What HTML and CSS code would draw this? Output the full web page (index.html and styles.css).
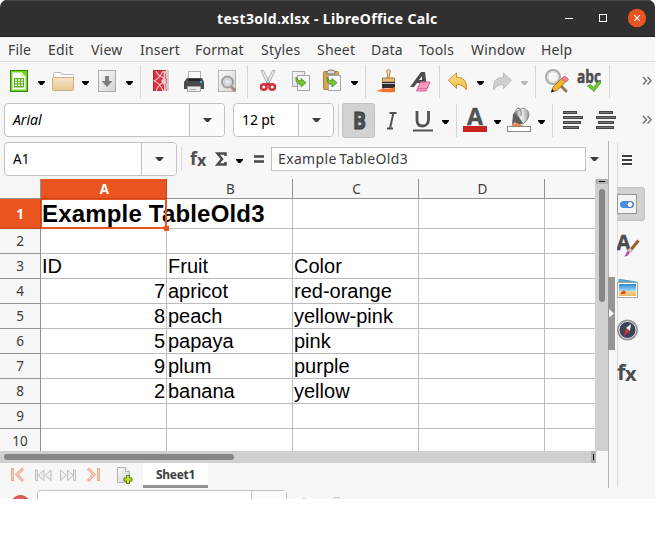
FILE: index.html
```html
<!DOCTYPE html>
<html lang="en">
<head>
<meta charset="utf-8">
<title>test3old.xlsx - LibreOffice Calc</title>
<link rel="stylesheet" href="styles.css">
</head>
<body>
<svg class="defs" width="0" height="0">
  <defs>
    <linearGradient id="paper" x1="0" y1="0" x2="1" y2="1"><stop offset="0" stop-color="#fafafa"/><stop offset="1" stop-color="#d4d4d4"/></linearGradient>
    <linearGradient id="tan" x1="0" y1="0" x2="0" y2="1"><stop offset="0" stop-color="#f8e6c8"/><stop offset="1" stop-color="#e8c894"/></linearGradient>
    <linearGradient id="gold" x1="0" y1="0" x2="0" y2="1"><stop offset="0" stop-color="#fce08a"/><stop offset="1" stop-color="#f2b93c"/></linearGradient>
    <linearGradient id="metal" x1="0" y1="0" x2="1" y2="0"><stop offset="0" stop-color="#777"/><stop offset=".5" stop-color="#f1f1f1"/><stop offset="1" stop-color="#999"/></linearGradient>
    <linearGradient id="sky" x1="0" y1="0" x2="0" y2="1"><stop offset="0" stop-color="#2a87cf"/><stop offset=".6" stop-color="#a5def5"/><stop offset=".62" stop-color="#f7d596"/><stop offset="1" stop-color="#eeb35d"/></linearGradient>
    <path id="drop" d="M0 0h7v1L4.500 4h-2L0 1z"/>
    <path id="copyarrow" d="M0 1q1 4 5 4V2.500l5 4.200-5 4.300V8.500Q-1 8 0 1z" fill="#73c437" stroke="#4b8c1d" stroke-width=".8"/>
  </defs>
</svg>
<div class="window">
  <header class="titlebar">
    <h1>test3old.xlsx - LibreOffice Calc</h1>
    <svg class="controls" width="97" height="36" viewBox="558 0 97 36">
      <path d="M565 18.500h8" stroke="#fff"/>
      <rect x="599.500" y="14.500" width="7" height="7" fill="none" stroke="#fff"/>
      <circle cx="637" cy="18" r="9.200" fill="#e95420"/>
      <path d="M634.200 15.200l5.600 5.600m0-5.600l-5.600 5.600" stroke="#fff" stroke-width="1.200"/>
    </svg>
  </header>
  <nav class="menubar">
    <span>File</span><span>Edit</span><span>View</span><span>Insert</span><span>Format</span><span>Styles</span><span>Sheet</span><span>Data</span><span>Tools</span><span>Window</span><span>Help</span>
  </nav>

  <div class="toolbar">
    <svg width="48" height="38" viewBox="0 62 48 38">
      <rect x="10.500" y="70.500" width="17" height="21" fill="#80d11a" stroke="#2d8810"/>
      <path d="M12.500 72.500h9l4 4v13h-13z" fill="#fff" stroke="#bfe69c"/><path d="M21.500 72.500v4h4z" fill="#c7efa0"/>
      <rect x="14" y="78" width="10" height="9.500" fill="#5fae25"/>
      <path d="M15 80h2m1 0h2m1 0h2M15 82.500h2m1 0h2m1 0h2M15 85.200h2m1 0h2m1 0h2" stroke="#efffe2" stroke-width="1.500"/>
      <use href="#drop" x="38" y="81"/>
    </svg>
    <svg width="44" height="38" viewBox="48 62 44 38">
      <path d="M53.500 90V73.500q0-1 1-1h6q1 0 1 2h11q1 0 1 1V80h-20" fill="#fff" stroke="#bbb"/>
      <rect x="52.500" y="77.500" width="21" height="13" rx="1" fill="url(#tan)" stroke="#cfae7d"/>
      <use href="#drop" x="82" y="81"/>
    </svg>
    <svg width="48" height="38" viewBox="92 62 48 38">
      <rect x="98.500" y="70.500" width="17" height="21" fill="url(#paper)" stroke="#acacac"/>
      <path d="M105 76h4v5h3.500l-5.500 6-5.500-6h3.500z" fill="#7c7f80"/>
      <use href="#drop" x="126" y="81"/>
    </svg>
    <i class="sep"></i>
    <svg width="106" height="38" viewBox="141 62 106 38">
      <rect x="153.500" y="70.500" width="15" height="20" fill="#d9303c" stroke="#b52631"/>
      <path d="M163 71h3.500q-2.500 5 0 10-2 5 0 10H163q3-5-2-10 4-4 2-10z" fill="#e8c9cb"/>
      <path d="M166 70h3v21h-2q-2-5 0-10-2-5-1-11z" fill="#d6cccc"/>
      <path d="M156 71q2 5 8 7M156 91q2-6 8-9M163 71q-4 8-9 10 6 2 9 10" fill="none" stroke="#f7c8cb" stroke-width="1.100"/>
      <path d="M188.500 71.500h12v9h-12z" fill="#fafafa" stroke="#b0b0b0"/>
      <path d="M187 78h15l2 4v7h-20v-7z" fill="#494b4c"/><path d="M188.500 80h12" stroke="#222" stroke-width="2"/>
      <path d="M187.500 86.500h13v5h-13z" fill="#ececec" stroke="#a2a2a2"/><path d="M190 89.500h6" stroke="#aaa"/>
      <rect x="200" y="81" width="2" height="2" fill="#25b9ef"/>
      <rect x="218.500" y="70.500" width="17" height="21" fill="url(#paper)" stroke="#b3b3b3"/>
      <path d="M231.500 87l3 3" stroke="#a18b7e" stroke-width="3" stroke-linecap="round"/>
      <circle cx="227.500" cy="82" r="5.500" fill="#ddd" stroke="#9f9f9f" stroke-width="2"/><circle cx="227.500" cy="82" r="3" fill="#e1e8ef" stroke="#ccc"/>
    </svg>
    <i class="sep"></i>
    <svg width="117" height="38" viewBox="248 62 117 38">
      <path d="M261 71l2-1 7 13-2 2zM275 71l-2-1-7 13 2 2z" fill="#eee" stroke="#999" stroke-width=".8"/>
      <ellipse cx="263.800" cy="87" rx="2.800" ry="2.800" fill="#fff" stroke="#d62c38" stroke-width="2.500"/><ellipse cx="272.200" cy="87" rx="2.800" ry="2.800" fill="#fff" stroke="#d62c38" stroke-width="2.500"/>
      <circle cx="268" cy="84" r="1.400" fill="#b8232e"/>
      <rect x="292.500" y="71.500" width="12" height="15" fill="url(#paper)" stroke="#aaa"/><rect x="297.500" y="75.500" width="12" height="15" fill="#f7f7f7" stroke="#a8a8a8"/><use href="#copyarrow" x="296" y="76"/>
      <rect x="323.500" y="71.500" width="15" height="18" rx="1" fill="#d9a657" stroke="#a8823f"/><path d="M327 72q0-2 4-2t4 2v2h-8z" fill="#ddd" stroke="#777"/>
      <rect x="328.500" y="75.500" width="12" height="15" fill="#f7f7f7" stroke="#a8a8a8"/><use href="#copyarrow" x="327" y="76"/>
      <use href="#drop" x="351" y="81"/>
    </svg>
    <i class="sep"></i>
    <svg width="73" height="38" viewBox="366 62 73 38">
      <path d="M387.500 78v-4q-2-4 1-4.500 3 .5 1 4.500v4" fill="#f3d9a8" stroke="#b08a50"/>
      <path d="M382.500 78h12v4h-12z" fill="#e5bd79" stroke="#a27b44"/>
      <path d="M382 82h13v6h-13z" fill="#2e2e2e"/><path d="M382 83.500h13" stroke="#bbb"/>
      <path d="M376 91q5-1 7-3 6 2 12-1v5q-10 1-19-1z" fill="#f5712a"/>
      <path d="M421 72h4l2 15h-4l-1-4h-5l-3 4h-4zM422 76l-3 4h3z" fill="#4b4e50" fill-rule="evenodd"/>
      <path d="M420.500 82h9.500l-4 9h-9.500z" fill="#f89ac0" stroke="#d75b95" stroke-linejoin="round"/><path d="M417.500 88.500h9" stroke="#ee6aa5"/>
    </svg>
    <i class="sep"></i>
    <svg width="95" height="38" viewBox="440 62 95 38">
      <path d="M448.500 80l8-7v4.500q11-1 10 12.500-3-5.500-10-5.500v4z" fill="url(#gold)" stroke="#c59430"/>
      <use href="#drop" x="477" y="81"/>
      <path d="M511.500 80l-8-7v4.500q-11-1-10 12.500 3-5.500 10-5.500v4z" fill="#cfcfcf" stroke="#bdbdbd"/>
      <use href="#drop" x="521" y="81" fill="#b7b7b7"/>
    </svg>
    <i class="sep"></i>
    <svg width="73" height="38" viewBox="536 62 73 38">
      <path d="M558 83l8 8" stroke="#94745a" stroke-width="3" stroke-linecap="round"/><circle cx="553" cy="77" r="7" fill="#f2f2f2" stroke="#aaa" stroke-width="2"/><circle cx="553" cy="77" r="5.200" fill="#f5f6f7" stroke="#d6d6d6"/>
      <path d="M551.500 92l1.500-5 10-10 4 3.500-10 10z" fill="#f2b62e" stroke="#906618" stroke-width=".8"/><path d="M561.500 78.500l2-2q2-1 4 1.500t-.5 3l-1.500 1z" fill="#f0809a" stroke="#b46476" stroke-width=".7"/><path d="M551 92.500l1-3.500 2.500 2.200z" fill="#222"/>
      <text class="abc" x="577" y="83" textLength="24" lengthAdjust="spacingAndGlyphs">abc</text>
      <path d="M587.500 86l3-1.500 3 3 5-6.500 2.500 1.500-7 9z" fill="#6acb34" stroke="#49971e" stroke-width=".8"/>
    </svg>
    <i class="sep"></i>
    <svg width="45" height="38" viewBox="610 62 45 38"><path d="M643 77l3.500 3.800-3.500 3.800m4.500-7.600l3.500 3.800-3.500 3.800" fill="none" stroke="#73777a" stroke-width="1.500"/></svg>
  </div>

  <div class="formatbar">
    <div class="combo font"><em>Arial</em><b><svg width="9" height="5"><path d="M0 0h9L5.500 4h-2z" fill="#3c3c3c"/></svg></b></div>
    <div class="combo size"><span>12 pt</span><b><svg width="9" height="5"><path d="M0 0h9L5.500 4h-2z" fill="#3c3c3c"/></svg></b></div>
    <i class="sep"></i>
    <svg width="117" height="42" viewBox="339 99 117 42">
      <rect x="342.500" y="103.500" width="32" height="34" rx="2" fill="#d2d2d2" stroke="#c2c2c2"/>
      <text class="glyph bold" x="353" y="129" textLength="13" lengthAdjust="spacingAndGlyphs">B</text>
      <path d="M389.500 113h7m-9.500 15.500h6M393.500 112.500l-3.500 16" stroke="#505355" stroke-width="2" fill="none"/>
      <path d="M417 111v9q0 6 5.500 6t6-6v-9" fill="none" stroke="#505355" stroke-width="2.800"/><path d="M413 130.500h20" stroke="#505355" stroke-width="2"/>
      <use href="#drop" x="442" y="120"/>
    </svg>
    <i class="sep"></i>
    <svg width="95" height="42" viewBox="457 99 95 42">
      <text class="glyph" x="467" y="125" textLength="16" lengthAdjust="spacingAndGlyphs">A</text>
      <rect x="463" y="126" width="24" height="6" fill="#c9211e"/><use href="#drop" x="494" y="120"/>
      <path d="M514 113l9-5q6 2 6 7-1 6-6 9l-7-1z" fill="url(#metal)" stroke="#8b8b8b"/>
      <path d="M512 125l1-11q3-1 5 2l5 7-4 2-4-3z" fill="#5d5d5d"/><path d="M517 116q-3-6 1-8 4 0 3 8" fill="none" stroke="#777"/>
      <path d="M511 126q4-5 9-1.500l4 1.500z" fill="#ef8547"/>
      <rect x="507.500" y="126.500" width="23" height="5" fill="#fff" stroke="#888"/><use href="#drop" x="538" y="120"/>
    </svg>
    <i class="sep"></i>
    <svg width="102" height="42" viewBox="553 99 102 42">
      <path d="M563 112.500h14m-14 5h20m-20 5h18m-18 5h16m20-15h14m-17 5h20m-18 5h16m-18 5h18" stroke="#414345" stroke-width="3"/>
      <path d="M564 112.500h12m-12 5h18m-18 5h16m-16 5h14m22-15h12m-15 5h18m-16 5h14m-16 5h16" stroke="#777"/>
      <path d="M643 116l3.500 3.800-3.500 3.800m4.500-7.600l3.500 3.800-3.500 3.800" fill="none" stroke="#73777a" stroke-width="1.500"/>
    </svg>
  </div>

  <div class="workspace">
    <main class="sheetpane">
      <div class="formula">
        <div class="combo name"><span>A1</span><b><svg width="9" height="5"><path d="M0 0h9L5.500 4h-2z" fill="#3c3c3c"/></svg></b></div>
        <svg width="91" height="37" viewBox="180 141 91 37">
          <path d="M181.500 147v24" stroke="#d7d7d7"/>
          <text class="fx" x="190" y="165">f</text><text class="fxs" x="197" y="165.500">x</text>
          <path d="M225.500 156v-2.500h-8l4.500 5.500-4.500 5.500h8V162" fill="none" stroke="#4c4e50" stroke-width="2.500"/>
          <use href="#drop" x="236" y="159"/>
          <path d="M254 156.500h10m-10 5h10" stroke="#444648" stroke-width="2.500"/>
        </svg>
        <div class="input">Example TableOld3</div>
        <svg class="expand" width="9" height="5"><path d="M0 0h9L5.500 4h-2z" fill="#3c3c3c"/></svg>
      </div>
      <div class="gridrow">
        <table>
          <colgroup><col class="num"><col><col><col><col><col class="last"></colgroup>
          <thead><tr><th></th><th class="on">A</th><th>B</th><th>C</th><th>D</th><th></th></tr></thead>
          <tbody>
            <tr class="big"><th class="on">1</th><td class="cursor">Example TableOld3</td><td></td><td></td><td></td><td></td></tr>
            <tr><th>2</th><td></td><td></td><td></td><td></td><td></td></tr>
            <tr><th>3</th><td>ID</td><td>Fruit</td><td>Color</td><td></td><td></td></tr>
            <tr><th>4</th><td class="r">7</td><td>apricot</td><td>red-orange</td><td></td><td></td></tr>
            <tr><th>5</th><td class="r">8</td><td>peach</td><td>yellow-pink</td><td></td><td></td></tr>
            <tr><th>6</th><td class="r">5</td><td>papaya</td><td>pink</td><td></td><td></td></tr>
            <tr><th>7</th><td class="r">9</td><td>plum</td><td>purple</td><td></td><td></td></tr>
            <tr><th>8</th><td class="r">2</td><td>banana</td><td>yellow</td><td></td><td></td></tr>
            <tr><th>9</th><td></td><td></td><td></td><td></td><td></td></tr>
            <tr><th>10</th><td></td><td></td><td></td><td></td><td></td></tr>
          </tbody>
        </table>
        <div class="vscroll"><i></i><b></b></div>
      </div>
      <div class="hscroll"><b></b><i></i></div>
      <div class="tabs">
        <svg width="143" height="25" viewBox="0 463 143 25">
          <g fill="none" stroke-width="3"><path d="M12.500 468v13M23 468.500l-6 6 6 6.500M98.500 468v13M88 468.500l6 6-6 6.500" stroke="#eda88b"/><path d="M12.500 469v11M22.500 469l-5.500 5.500 5.500 6M98.500 469v11M88.500 469l5.500 5.500-5.500 6" stroke="#f8cdb9" stroke-width="1.200"/></g>
          <path d="M35.500 470v10.500h2V470zM44 470v10.500l-6-5zM51 470v10.500l-6-5zM75.500 470v10.500h-2V470zM60.500 470v10.500l6-5zM67.500 470v10.500l6-5z" fill="#efefef" stroke="#bcbcbc"/>
          <path d="M117.500 467.500h8l4 4v11h-12z" fill="url(#paper)" stroke="#b3b3b3"/><path d="M125.500 467.500v4h4" fill="#fff" stroke="#b3b3b3"/>
          <path d="M126.500 475.500h3v2.500h2.500v3h-2.500v2.500h-3V481H124v-3h2.500z" fill="#c0df3e" stroke="#587c10"/>
        </svg>
        <span class="tab">Sheet1</span>
      </div>
    </main>
    <div class="splitter"><svg width="7" height="73"><path d="M1 32l5 4.500-5 4z" fill="#fff"/></svg></div>
    <aside>
      <svg width="38" height="346" viewBox="617 141 38 346">
        <path d="M617.500 142v345" stroke="#dedede"/>
        <path d="M622 156h10m-10 4h10m-10 4h10" stroke="#3c3c3c" stroke-width="2"/>
        <path d="M617 187.500h25q2.500 0 2.500 2.500v28q0 2.500-2.500 2.500h-25z" fill="#d2d2d2" stroke="#c2c2c2"/>
        <rect x="617.500" y="194.500" width="19" height="19" fill="#f5f5f5" stroke="#999"/>
        <rect x="620" y="201" width="14" height="7" rx="3.500" fill="#4590e6"/><circle cx="630" cy="204.500" r="3" fill="#fff" stroke="#4a6e9a"/>
        <text class="deck" x="616.500" y="250" textLength="14" lengthAdjust="spacingAndGlyphs">A</text>
        <path d="M638.500 240.500l-9 11" stroke="#a65c24" stroke-width="3"/><path d="M631 249l-3 3" stroke="#ccc" stroke-width="3.500"/><path d="M630 252q-2 5-6 4.500 2-1 3-5.500z" fill="#c33fb7"/>
        <path d="M618 278l19 3-1 6h-18z" fill="#56a5c3" stroke="#fff"/><rect x="617.500" y="282.500" width="20" height="15" fill="#fff" stroke="#a5a5a5"/><rect x="619" y="284" width="17" height="12" fill="url(#sky)"/><path d="M621 292l2-1 1-1 1 1 1 1-1 2h-4z" fill="#e45422"/>
        <circle cx="627.500" cy="330" r="9.500" fill="#3b4354" stroke="#929292" stroke-width="2"/><circle cx="627.500" cy="330" r="8.500" fill="none" stroke="#ddd"/>
        <path d="M631 324l-1 7-4-3z" fill="#fff"/><path d="M624 336l2-8 4 3z" fill="#d9303a"/>
        <text class="sidefx" x="617" y="380">f</text><text class="sidex" x="625" y="381">x</text>
      </svg>
    </aside>
  </div>
  <footer>
    <svg width="37" height="9" viewBox="0 490 37 9"><circle cx="20.500" cy="505" r="9.500" fill="#e65b5d" stroke="#cf4545"/></svg>
    <div class="find"><i></i></div>
    <svg width="60" height="9" viewBox="287 490 60 9"><path d="M303 498.500h2M334 499v-1.500h5v1.500" fill="none" stroke="#c5c5c5"/></svg>
  </footer>
</div>
</body>
</html>
```

FILE: styles.css
```css
* { box-sizing: border-box; }
body { margin: 0; background: #fff; color: #3c3c3c; font-family: "Noto Sans", sans-serif; overflow: hidden; }
svg { display: block; flex: none; }
.defs { position: absolute; }
.window { width: 655px; height: 499px; background: #f7f7f7; overflow: hidden; border-radius: 7px 7px 0 0; }

.titlebar { display: flex; height: 37px; background: #312f30; border-top: 1px solid #484647; border-bottom: 1px solid #201f20; }
.titlebar h1 { margin: 0; flex: 1; padding-left: 217px; color: #fff; font: bold 14px/35px "Noto Sans", sans-serif; letter-spacing: .34px; white-space: nowrap; }
.controls { margin-top: -1px; }

.menubar { display: grid; grid-template-columns: 40px 43px 49px 55px 66px 56px 54px 48px 52px 70px 1fr; height: 25px; padding-left: 8px; border-bottom: 1px solid #dadada; font-size: 14px; line-height: 25px; letter-spacing: .2px; }

.toolbar { display: flex; height: 38px; }
.sep { flex: none; width: 1px; background: #d7d7d7; margin: 3px 0 2px; }
.abc { font: bold 17px "Open Sans", sans-serif; fill: #4b4d4f; stroke: #4b4d4f; stroke-width: .5px; }

.formatbar { display: flex; height: 41px; }
.formatbar > svg { margin-top: -1px; }
.formatbar > .sep { height: 33px; margin-top: 4px; }
.combo { display: flex; flex: none; height: 34px; margin-top: 3px; border: 1px solid #c2c2c2; border-radius: 4px; background: #fff; color: #000; overflow: hidden; font-size: 14px; line-height: 32px; }
.combo > :first-child { flex: 1; padding-left: 8px; }
.combo b { display: flex; align-items: center; justify-content: center; width: 35px; border-left: 1px solid #c2c2c2; background: #fbfbfb; }
.font { width: 221px; margin-left: 4px; }
.size { width: 101px; margin: 3px 4px 0 8px; letter-spacing: -.1px; }
.glyph { font: bold 23px "Open Sans", sans-serif; fill: #505355; stroke: #505355; stroke-width: .4px; }
.glyph.bold { stroke: #383a3b; stroke-width: 1px; }

.workspace { display: flex; height: 347px; }
.sheetpane { width: 608px; }
.formula { display: flex; height: 38px; }
.name { width: 173px; margin: 1px 3px 0 4px; font-size: 13.5px; }
.input { width: 315px; height: 24px; margin-top: 6px; padding-left: 6px; border: 1px solid #c2c2c2; background: #fff; font-size: 14px; line-height: 22px; letter-spacing: .35px; word-spacing: -1.5px; white-space: nowrap; }
.expand { margin: 16px 0 0 4px; }
.fx { font: bold 18px "Open Sans", sans-serif; fill: #4c4e50; }
.fxs { font: bold 16px "Open Sans", sans-serif; fill: #4c4e50; }

.gridrow { display: flex; width: 608px; height: 272px; overflow: hidden; }
table { width: 595px; flex: none; height: 275px; table-layout: fixed; border-collapse: separate; border-spacing: 0; }
col { width: 126px; }
col.num { width: 41px; }
col.last { width: 50px; }
tr { height: 25px; }
thead tr { height: 20px; }
tr.big { height: 30px; }
th { padding: 0; background: #f7f7f7; border-right: 1px solid #939393; border-bottom: 1px solid #939393; font-size: 13.5px; font-weight: 400; line-height: 18px; }
thead th { padding-left: 2px; }
thead th:last-child { border-right: 0; }
th.on { background: #e95420; border-color: #c74519; color: #fff; font-weight: 700; }
thead th { height: 20px; }
tbody th { height: 25px; line-height: 22px; }
td { height: 25px; padding: 0 1px; background: #fff; border-right: 1px solid #bcbcbc; border-bottom: 1px solid #bcbcbc; color: #000; font: 20px/22px "Liberation Sans", Arial, sans-serif; white-space: nowrap; }
td:last-child { border-right: 0; }
td.r { text-align: right; padding-right: 1px; }
tr.big th, tr.big td { height: 30px; }
.cursor { position: relative; font: bold 24px/28px "Liberation Sans", Arial, sans-serif; letter-spacing: .18px; overflow: visible; z-index: 1; }
.cursor::before { content: ""; position: absolute; inset: 0 -1px -1px 0; border: 2px solid #e95420; border-width: 1px 2px 2px 1px; }
.cursor::after { content: ""; position: absolute; right: -3px; bottom: -3px; width: 5px; height: 5px; background: #e95420; }

.vscroll { width: 13px; background: #d0d0d0; }
.vscroll i { display: block; height: 5px; margin-left: 1px; background: linear-gradient(#000, #000) center / 6px 1px no-repeat #b1b1b1; }
.vscroll b { display: block; width: 6px; height: 113px; margin: 5px 0 0 4px; border-radius: 3px; background: #868686; }
.hscroll { display: flex; align-items: center; justify-content: space-between; width: 596px; height: 12px; background: #d0d0d0; }
.hscroll b { width: 230px; height: 6px; margin-left: 4px; border-radius: 3px; background: #868686; }
.hscroll i { width: 5px; height: 12px; background: linear-gradient(#000, #000) center / 1px 6px no-repeat #b1b1b1; }
.tabs { display: flex; height: 25px; }
.tab { width: 65px; height: 25px; border-bottom: 3px solid #939393; background: #fff; text-align: center; font: bold 12px/24px "Noto Sans", sans-serif; letter-spacing: -.3px; }

.splitter { display: flex; align-items: flex-start; width: 9px; border-left: 1px solid #b4b4b4; }
.splitter svg { margin: 136px 0 0 -1px; background: #959595; }
aside { width: 38px; }
.deck { font: bold 21px "Open Sans", sans-serif; fill: #4b4d4f; stroke: #4b4d4f; stroke-width: .5px; }
.sidefx { font: bold 22px "Open Sans", sans-serif; fill: #4b4d4f; }
.sidex { font: bold 20px "Open Sans", sans-serif; fill: #4b4d4f; }

footer { display: flex; height: 11px; padding-top: 2px; overflow: hidden; }
.find { width: 250px; height: 34px; border: 1px solid #c2c2c2; border-radius: 4px; background: #fff; flex: none; }
.find i { display: block; width: 35px; height: 32px; margin-left: auto; border-left: 1px solid #c2c2c2; background: #fbfbfb; }
```
